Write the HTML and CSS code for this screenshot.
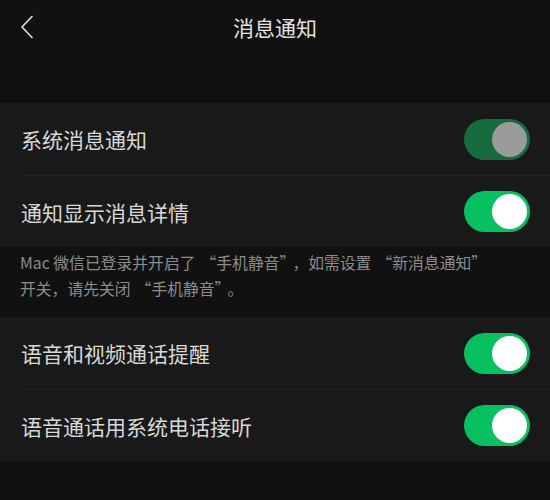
FILE: index.html
```html
<!DOCTYPE html>
<html lang="zh-CN">
<head>
<meta charset="utf-8">
<link rel="stylesheet" href="styles.css">
</head>
<body>
<div class="page">
  <header class="nav">
    <svg class="back" width="14" height="24" viewBox="0 0 14 24"><path d="M12 1.5 L2 12 L12 22.5" fill="none" stroke="#dcdcdc" stroke-width="1.7" stroke-linecap="round" stroke-linejoin="round"/></svg>
    <h1 class="title">消息通知</h1>
  </header>
  <div class="gap"></div>
  <section class="card">
    <div class="row">
      <span class="label">系统消息通知</span>
      <span class="switch dim"><span class="knob grey"></span></span>
    </div>
    <div class="row">
      <span class="label">通知显示消息详情</span>
      <span class="switch"><span class="knob"></span></span>
    </div>
  </section>
  <p class="note">Mac 微信已登录并开启了<span class="qo">“</span>手机静音<span class="qc">”</span>，如需设置<span class="qo">“</span>新消息通知<span class="qc">”</span><br>开关，请先关闭<span class="qo">“</span>手机静音<span class="qc">”</span>。</p>
  <section class="card">
    <div class="row">
      <span class="label">语音和视频通话提醒</span>
      <span class="switch"><span class="knob"></span></span>
    </div>
    <div class="row">
      <span class="label">语音通话用系统电话接听</span>
      <span class="switch"><span class="knob"></span></span>
    </div>
  </section>
</div>
</body>
</html>
```
FILE: styles.css
```css
html, body {
  margin: 0;
  padding: 0;
  background: #111111;
}
body {
  font-family: "Noto Sans CJK SC", "Noto Sans", sans-serif;
  width: 550px;
  height: 500px;
  overflow: hidden;
}
.page {
  display: flex;
  flex-direction: column;
}
.nav {
  height: 54px;
  position: relative;
  display: flex;
  align-items: center;
  justify-content: center;
}
.back {
  position: absolute;
  left: 20px;
  top: 15px;
}
.title {
  margin: 0;
  font-size: 21px;
  font-weight: 400;
  color: #e2e2e2;
  letter-spacing: 0;
}
.gap {
  height: 49px;
}
.card {
  background: #191919;
  display: flex;
  flex-direction: column;
}
.row {
  height: 72px;
  display: flex;
  align-items: center;
  justify-content: space-between;
  padding: 0 20px 0 21px;
  box-sizing: border-box;
}
.row + .row {
  border-top: 1px solid #222222;
  height: 72px;
  margin-left: 20px;
  padding-left: 1px;
}
.label {
  font-size: 21px;
  color: #d8d8d8;
}
.switch {
  width: 66px;
  height: 41px;
  border-radius: 21px;
  background: #07c160;
  display: flex;
  align-items: center;
  justify-content: flex-end;
  padding-right: 3px;
  box-sizing: border-box;
}
.switch.dim {
  background: #176c3e;
}
.knob {
  width: 35px;
  height: 35px;
  border-radius: 50%;
  background: #ffffff;
}
.knob.grey {
  background: #9b9b9b;
}
.note {
  margin: 0;
  height: 70px;
  box-sizing: border-box;
  padding: 3px 20px 0 20px;
  font-size: 15.8px;
  line-height: 26px;
  color: #8c8c8c;
}
.qo {
  margin-left: 5px;
}
.qc {
  margin-right: 5px;
}
```
